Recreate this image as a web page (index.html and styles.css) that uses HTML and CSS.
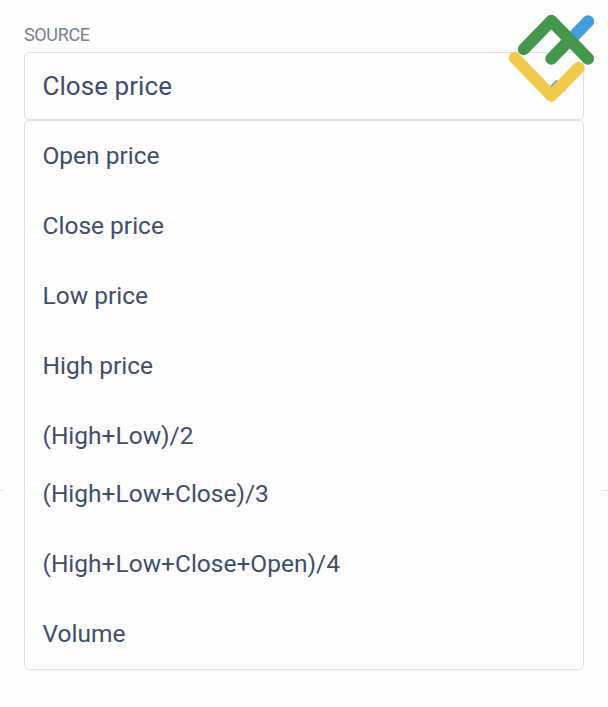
FILE: index.html
```html
<!DOCTYPE html>
<html lang="en">
<head>
<meta charset="utf-8">
<title>Source</title>
<link rel="stylesheet" href="styles.css">
</head>
<body>
<main class="form">
  <div class="label">SOURCE</div>
  <div class="field">
    <span>Close price</span>
    <svg class="chevron" width="20" height="14" viewBox="0 0 20 14"><path d="M1.3 12 10.3 2.6 19 12"/></svg>
  </div>
  <ul class="menu">
    <li>Open price</li>
    <li>Close price</li>
    <li>Low price</li>
    <li>High price</li>
    <li>(High+Low)/2</li>
    <li class="tight">(High+Low+Close)/3</li>
    <li>(High+Low+Close+Open)/4</li>
    <li>Volume</li>
  </ul>
</main>
<i class="rule rule-left"></i>
<i class="rule rule-right"></i>
<svg class="logo" width="110" height="110" viewBox="498 0 110 110">
  <path class="blue" d="M588.2 21.3 572 38"/>
  <path class="green" d="M523.8 49.2 551.3 20.8 588.1 58.7M551.3 58.7 567.5 42"/>
  <path class="yellow" d="M514.8 57.9 551.3 95.7 578.7 67.8"/>
</svg>
</body>
</html>
```
FILE: styles.css
```css
* { box-sizing: border-box; }
body {
  margin: 0;
  height: 707px;
  overflow: hidden;
  position: relative;
  background: #fefefe;
  color: #3f4d6c;
  font-family: Roboto, sans-serif;
}
.form { padding: 24px 24px 0; }
.label {
  height: 28px;
  font-size: 18px;
  line-height: 22px;
  letter-spacing: -0.35px;
  color: #777f95;
}
.field {
  height: 68px;
  padding: 0 17px 0 17.5px;
  display: flex;
  align-items: center;
  justify-content: space-between;
  border: 1px solid #e0e0e0;
  border-radius: 5px;
  font-size: 26px;
  letter-spacing: 0.06px;
}
.chevron { fill: none; stroke: #8790a5; stroke-width: 2.4; }
.menu {
  list-style: none;
  margin: 0;
  padding: 0 17.5px;
  height: 550px;
  border: 1px solid #e0e0e0;
  border-radius: 5px;
  font-size: 24.5px;
}
.menu li { height: 70px; line-height: 70px; }
.menu .tight { margin-top: -12px; }
.rule { position: absolute; top: 490px; height: 1px; background: #e0e0e0; }
.rule-left { left: 0; width: 3px; }
.rule-right { right: 0; width: 6px; }
.logo { position: absolute; top: 0; right: 0; fill: none; stroke-width: 12; stroke-linecap: round; stroke-linejoin: round; }
.blue { stroke: #459ddf; }
.green { stroke: #43964b; }
.yellow { stroke: #f0cb4b; }
```
